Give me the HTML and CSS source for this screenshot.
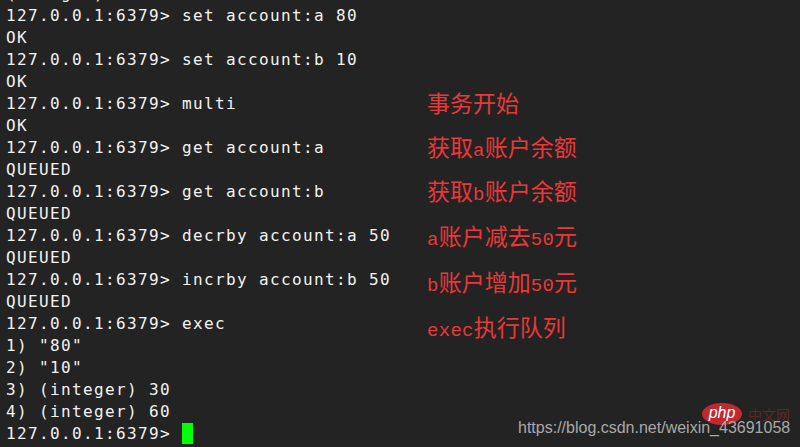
FILE: index.html
```html
<!DOCTYPE html>
<html>
<head>
<meta charset="utf-8">
<link rel="stylesheet" href="styles.css">
</head>
<body>
<div class="term">
  <div class="row"><span class="cmd">(integer) 1</span></div>
  <div class="row"><span class="cmd">127.0.0.1:6379&gt; set account:a 80</span></div>
  <div class="row"><span class="cmd">OK</span></div>
  <div class="row"><span class="cmd">127.0.0.1:6379&gt; set account:b 10</span></div>
  <div class="row"><span class="cmd">OK</span></div>
  <div class="row"><span class="cmd">127.0.0.1:6379&gt; multi</span><span class="note">事务开始</span></div>
  <div class="row"><span class="cmd">OK</span></div>
  <div class="row"><span class="cmd">127.0.0.1:6379&gt; get account:a</span><span class="note">获取<span class="lat">a</span>账户余额</span></div>
  <div class="row"><span class="cmd">QUEUED</span></div>
  <div class="row"><span class="cmd">127.0.0.1:6379&gt; get account:b</span><span class="note">获取<span class="lat">b</span>账户余额</span></div>
  <div class="row"><span class="cmd">QUEUED</span></div>
  <div class="row"><span class="cmd">127.0.0.1:6379&gt; decrby account:a 50</span><span class="note n2"><span class="lat">a</span>账户减去<span class="lat">50</span>元</span></div>
  <div class="row"><span class="cmd">QUEUED</span></div>
  <div class="row"><span class="cmd">127.0.0.1:6379&gt; incrby account:b 50</span><span class="note n3"><span class="lat">b</span>账户增加<span class="lat">50</span>元</span></div>
  <div class="row"><span class="cmd">QUEUED</span></div>
  <div class="row"><span class="cmd">127.0.0.1:6379&gt; exec</span><span class="note n4"><span class="lat">exec</span>执行队列</span></div>
  <div class="row"><span class="cmd">1) "80"</span></div>
  <div class="row"><span class="cmd">2) "10"</span></div>
  <div class="row"><span class="cmd">3) (integer) 30</span></div>
  <div class="row"><span class="cmd">4) (integer) 60</span></div>
  <div class="row"><span class="cmd">127.0.0.1:6379&gt; <span class="cursor"></span></span></div>
</div>
<div class="watermark">
  <div class="logo"><span class="php">php</span><span class="cn">中文网</span></div>
  <div class="url">https://blog.csdn.net/weixin_43691058</div>
</div>
</body>
</html>
```
FILE: styles.css
```css
html, body {
  margin: 0;
  padding: 0;
  width: 800px;
  height: 447px;
  overflow: hidden;
  background: #232323;
}
body { position: relative; }
.term {
  margin-top: -17px;
  padding-left: 6px;
}
.row {
  display: grid;
  grid-template-columns: 421px auto;
  height: 22px;
  line-height: 22px;
}
.cmd {
  font-family: "DejaVu Sans Mono", monospace;
  font-size: 16px;
  letter-spacing: 1.37px;
  color: #f2f2f2;
  white-space: pre;
}
.cursor {
  display: inline-block;
  width: 11px;
  height: 21px;
  background: #00ff00;
  vertical-align: top;
}
.note {
  position: relative;
  top: -2px;
  font-family: "Noto Sans CJK SC", sans-serif;
  font-size: 23px;
  color: #e8383a;
  white-space: nowrap;
}
.lat {
  font-family: "Liberation Mono", monospace;
  font-size: 19px;
  letter-spacing: 0.3px;
}
.n2 { top: -1px; }
.n3 { top: 1px; }
.n4 { top: 2px; }
.watermark {
  position: absolute;
  left: 518px;
  top: 400px;
  width: 275px;
  height: 40px;
}
.logo {
  position: absolute;
  left: 184px;
  top: 3px;
  display: flex;
  align-items: center;
}
.php {
  display: inline-block;
  width: 40px;
  height: 22px;
  border-radius: 50%;
  background: #c0292d;
  color: #fff;
  font-family: "Liberation Sans", Arial, sans-serif;
  font-style: italic;
  font-size: 16px;
  line-height: 19px;
  text-align: center;
}
.cn {
  margin-left: 6px;
  font-family: "Noto Sans CJK SC", sans-serif;
  font-size: 14px;
  line-height: 18px;
  color: rgba(200, 50, 50, 0.35);
}
.url {
  position: absolute;
  left: 0;
  top: 18px;
  font-family: "Liberation Sans", Arial, sans-serif;
  font-size: 16px;
  line-height: 20px;
  color: #a9a9a9;
  white-space: nowrap;
}
```
